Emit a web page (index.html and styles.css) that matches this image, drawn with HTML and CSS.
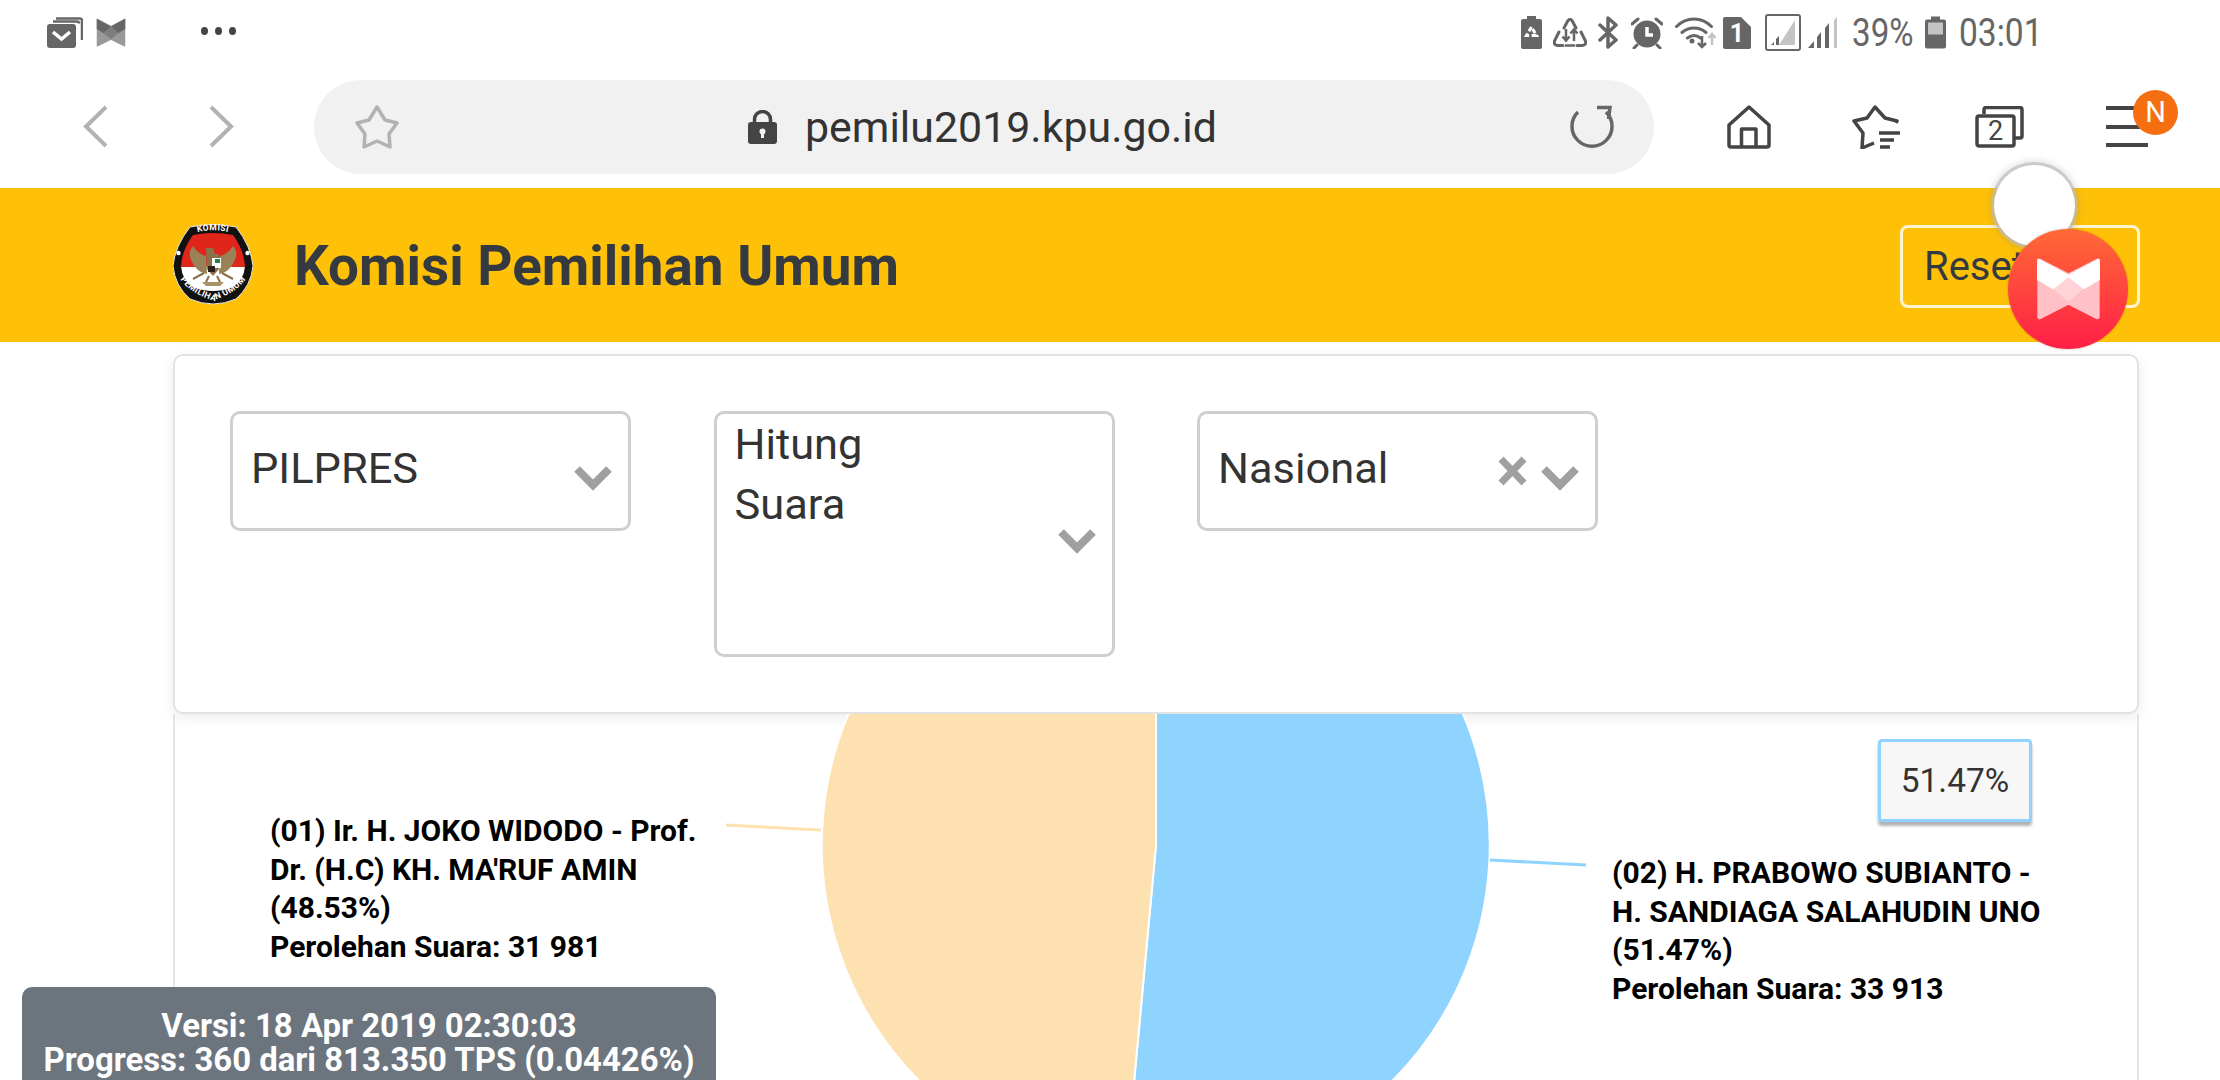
FILE: index.html
```html
<!DOCTYPE html>
<html lang="id">
<head>
<meta charset="utf-8">
<title>Komisi Pemilihan Umum</title>
<link rel="stylesheet" href="styles.css">
</head>
<body>
<header class="status">
  <svg class="ic mailstack" viewBox="0 0 36 31"><path d="M9 1.500H33a2 2 0 0 1 2 2V23" class="s-thin"/><path d="M6 4.500H30a2 2 0 0 1 2 2" class="s-thin"/><rect x="0" y="7" width="29" height="24" rx="3" class="f-dark"/><path d="M6 15l8.500 7 8.500-7" class="s-white"/></svg>
  <svg class="ic bow-small" viewBox="0 0 190 185"><path d="M8 8L95 55 182 8V178L95 135 8 178Z" fill="#999" stroke="#999" stroke-width="8" stroke-linejoin="round"/><path d="M4 4L95 55 48 97 4 70Z" fill="#666"/><path d="M186 4L95 55 142 97 186 70Z" fill="#666"/><path d="M95 55L142 97 95 135 48 97Z" fill="#7d7d7d"/></svg>
  <div class="dots"><i></i><i></i><i></i></div>
  <div class="status-right">
    <svg class="ic w21" viewBox="0 0 21 33"><path d="M6 0h9v3h4a2 2 0 0 1 2 2v26a2 2 0 0 1-2 2H2a2 2 0 0 1-2-2V5a2 2 0 0 1 2-2h4z" class="f-dark"/><path d="M10.500 11l-5 8.500h10z" class="s-recy"/></svg>
    <svg class="ic w34 g11" viewBox="0 0 34 30"><path d="M11 10l4-7.500q2-2 4 0l4 7.500M6 14L1.500 23q-1 4 3 4.500H10M24 27.500h5.500q4-.5 3-4.500L28 14" class="s-mid"/><path d="M13 11v11M9.500 18.500l3.500 4 3.500-4M21 23V12M17.500 15.500l3.500-4 3.500 4" class="s-fine"/><path d="M12 27.500h10" class="s-fine"/></svg>
    <svg class="ic w21 g11" viewBox="0 0 21 33"><path d="M2 9l16 15-8 7V2l8 7L2 24" class="s-bt"/></svg>
    <svg class="ic w32 g12" viewBox="0 0 32 32"><circle cx="16" cy="17" r="13.500" class="f-dark"/><path d="M16 10v8h6" class="s-white"/><path d="M1 7l6-5M31 7l-6-5M6 28l-3 3M26 28l3 3" class="s-mid"/></svg>
    <svg class="ic w43 g12" viewBox="0 0 43 32"><path d="M1.500 9.500c10-10 25-10 35 0M7 15.500c7-6 17-6 24 0M12.500 21c4-3 9-3 13 0" class="s-mid"/><circle cx="17" cy="24" r="2.500" class="f-dark"/><path d="M27 19v11M23 26l4 4 4-4" class="s-fine"/><path d="M37 28V17M33.500 21l3.500-4 3.500 4" class="s-light"/></svg>
    <svg class="ic w28 g5" viewBox="0 0 28 32"><path d="M2 0H18L28 10V30a2 2 0 0 1-2 2H2a2 2 0 0 1-2-2V2a2 2 0 0 1 2-2Z" class="f-dark"/><text x="14" y="25" class="sim-num">1</text></svg>
    <svg class="ic w36 g14" viewBox="0 0 36 37"><rect x="1" y="1" width="34" height="35" rx="2" class="s-box"/><path d="M30 6V31H14Z" fill="#c4c4c4"/><path d="M6 31l3-3v3zM11 31v-6l3-3v9z" fill="#666"/></svg>
    <svg class="ic w31 g7" viewBox="0 0 31 31"><path d="M0 31l6-7v7zM9 31V20l4-5v16zM17 31V11l4-5v25z" fill="#666"/><path d="M26 31V3l3-3v31z" fill="#c4c4c4"/></svg>
    <span class="st-text pct g13">39%</span>
    <svg class="ic w21 g13" viewBox="0 0 21 32"><path d="M6 0h9v3h4a2 2 0 0 1 2 2v25a2 2 0 0 1-2 2H2a2 2 0 0 1-2-2V5a2 2 0 0 1 2-2h4z" fill="#666"/><rect x="3" y="6" width="15" height="12" fill="#c4c4c4"/></svg>
    <span class="st-text clock g13">03:01</span>
  </div>
</header>

<nav class="toolbar">
  <svg class="ic back" viewBox="0 0 25 43"><path d="M23 2L3 21.500 23 41" class="s-nav"/></svg>
  <svg class="ic fwd" viewBox="0 0 25 43"><path d="M2 2L22 21.500 2 41" class="s-nav"/></svg>
  <div class="urlbar">
    <svg class="ic star" viewBox="0 0 44 44"><path d="M22 2L30 15 42 18 34 29 35 42 22 36 9 42 10 29 2 18 14 15Z" class="s-star"/></svg>
    <div class="url">
      <svg class="ic lock" viewBox="0 0 29 34"><path d="M6.500 14V9.500a8 8 0 0 1 16 0V14" class="s-lock"/><rect x="0" y="12" width="29" height="22" rx="3" fill="#444"/><circle cx="14.500" cy="21.500" r="3" fill="#f1f1f1"/><rect x="13" y="22" width="3" height="6" fill="#f1f1f1"/></svg>
      <span class="url-text">pemilu2019.kpu.go.id</span>
    </div>
    <svg class="ic reload" viewBox="0 0 45 44"><path d="M9 7A20 20 0 1 0 37 7" class="s-reload"/><path d="M28 2.500H41L39.500 14" class="s-reload"/></svg>
  </div>
  <svg class="ic home" viewBox="0 0 44 44"><path d="M22 2L2 20V40a2 2 0 0 0 2 2H40a2 2 0 0 0 2-2V20Z" class="s-tool"/><path d="M14.500 42V24H29V42" class="s-tool"/></svg>
  <svg class="ic starlist" viewBox="0 0 48 44"><path d="M44 18L45 16 33 13 23 2 15 13 2 16 11 28 10 43 22 38" class="s-tool"/><path d="M27 28H48M28 35H42M28 42H38" class="s-tool"/></svg>
  <svg class="ic tabs" viewBox="0 0 49 42"><path d="M9 8V3.500a2 2 0 0 1 2-2H45a2 2 0 0 1 2 2V30a2 2 0 0 1-2 2H40" class="s-tool"/><rect x="2" y="10" width="37" height="30" rx="2" class="s-tool"/><text x="20.500" y="34" class="tab-num">2</text></svg>
  <div class="menu"><i></i><i></i><i></i><span class="badge">N</span></div>
</nav>

<section class="brand">
  <svg class="logo" viewBox="0 0 80 81">
    <path d="M17 3Q40-2 63 3 78 22 80 42 78 62 63 75 40 85 17 75 2 62 0 42 2 22 17 3Z" fill="#111" stroke="#e8e8e0" stroke-width="1"/>
    <clipPath id="inner"><path d="M20 11Q40 7 60 11 71 26 72 42 71 56 60 63 40 71 20 63 9 56 8 42 9 26 20 11Z"/></clipPath>
    <g clip-path="url(#inner)">
      <rect x="0" y="0" width="80" height="43" fill="#e0251b"/>
      <rect x="0" y="43" width="80" height="30" fill="#fff"/>
    </g>
    <circle cx="5.500" cy="29" r="2.200" fill="#fff"/><circle cx="74.500" cy="29" r="2.200" fill="#fff"/>
    <path d="M17 33Q16 26 20 22 25 30 33 32L34 50Q22 48 17 33Z" fill="#9a8258"/>
    <path d="M63 33Q64 26 60 22 55 30 47 32L46 50Q58 48 63 33Z" fill="#9a8258"/>
    <path d="M33 24H40L42 30H46V45L40 52 34 45Z" fill="#8c7148"/>
    <rect x="39" y="34" width="9" height="10" fill="#fff"/><rect x="42" y="35" width="5" height="4" fill="#1f8a3c"/>
    <rect x="35" y="42" width="7" height="6" fill="#2a2018"/>
    <path d="M29 58H51L47 62H33Z" fill="#a89468"/>
    <path d="M20 55L31 49M60 55L49 49M36 52L33 58M44 52L47 58" stroke="#8c7148" stroke-width="2"/>
    <path id="arcTop" d="M18 10Q40 2.500 62 10" fill="none"/>
    <path id="arcBot" d="M2 44Q8 66 40 76.500 72 66 78 44" fill="none"/>
    <text class="logo-text"><textPath href="#arcTop" startOffset="50%">KOMISI</textPath></text>
    <text class="logo-text lower"><textPath href="#arcBot" startOffset="50%">PEMILIHAN UMUM</textPath></text>
  </svg>
  <h1 class="title">Komisi Pemilihan Umum</h1>
  <button class="reset">Reset</button>
</section>

<main class="main">
  <section class="filters">
    <div class="select">
      <div class="sel-text single">PILPRES</div>
      <svg class="chev" viewBox="0 0 38 26"><path d="M3 4L19 20 35 4" class="s-chev"/></svg>
    </div>
    <div class="select tall">
      <div class="sel-text">Hitung<br>Suara</div>
      <svg class="chev" viewBox="0 0 38 26"><path d="M3 4L19 20 35 4" class="s-chev"/></svg>
    </div>
    <div class="select">
      <div class="sel-text single">Nasional</div>
      <svg class="clear" viewBox="0 0 29 30"><path d="M3 3L26 27M26 3L3 27" class="s-clear"/></svg>
      <svg class="chev" viewBox="0 0 38 26"><path d="M3 4L19 20 35 4" class="s-chev"/></svg>
    </div>
  </section>

  <section class="chart">
    <svg class="pie" viewBox="0 0 1962 366">
      <path d="M981 131V-203A334 334 0 1 1 950.200 463.600Z" fill="#8fd3ff" stroke="#fff" stroke-width="2"/>
      <path d="M981 131L950.200 463.600A334 334 0 0 1 981-203Z" fill="#fde1b0" stroke="#fff" stroke-width="2"/>
      <path d="M551 111L646 116" class="lead-a"/>
      <path d="M1315 146L1411 151" class="lead-b"/>
    </svg>
    <div class="slice-label left-label">(01) Ir. H. JOKO WIDODO - Prof.<br>Dr. (H.C) KH. MA'RUF AMIN<br>(48.53%)<br>Perolehan Suara: 31 981</div>
    <div class="slice-label right-label">(02) H. PRABOWO SUBIANTO -<br>H. SANDIAGA SALAHUDIN UNO<br>(51.47%)<br>Perolehan Suara: 33 913</div>
    <div class="tip">51.47%</div>
  </section>
</main>

<div class="version">Versi: 18 Apr 2019 02:30:03<br>Progress: 360 dari 813.350 TPS (0.04426%)</div>

<div class="float-white"></div>
<div class="float-red">
  <svg class="bow-big" viewBox="0 0 190 185">
    <path d="M8 8L95 53 182 8V177L95 132 8 177Z" fill="#ffc0c6" stroke="#ffc0c6" stroke-width="14" stroke-linejoin="round"/>
    <path d="M95 53L142 90 95 132 48 90Z" fill="#ffd3d7"/>
    <path d="M4 4L95 53 48 90 1 62Z" fill="#fff" stroke="#fff" stroke-width="6" stroke-linejoin="round"/>
    <path d="M186 4L95 53 142 90 189 62Z" fill="#fff" stroke="#fff" stroke-width="6" stroke-linejoin="round"/>
  </svg>
</div>
</body>
</html>
```
FILE: styles.css
```css
* { box-sizing: border-box; }
html, body { margin: 0; padding: 0; }
body {
  position: relative;
  width: 2220px;
  height: 1080px;
  overflow: hidden;
  background: #fff;
  font-family: Roboto, "Liberation Sans", sans-serif;
  color: #343a40;
}
.ic { display: block; flex: none; }

/* status bar */
.status { height: 65px; display: flex; align-items: center; padding-left: 47px; }
.mailstack { width: 36px; height: 31px; }
.bow-small { width: 30px; height: 29px; margin-left: 13px; }
.dots { display: flex; gap: 7px; margin-left: 75px; margin-top: -3px; }
.dots i { display: block; width: 7px; height: 8px; border-radius: 50%; background: #444; }
.status-right { display: flex; align-items: center; margin-left: auto; padding-right: 182px; }
.w21 { width: 21px; height: 33px; }
.w34 { width: 34px; height: 30px; }
.w32 { width: 32px; height: 32px; }
.w43 { width: 43px; height: 32px; }
.w28 { width: 28px; height: 32px; }
.w36 { width: 36px; height: 37px; }
.w31 { width: 31px; height: 31px; }
.g5 { margin-left: 5px; }
.g7 { margin-left: 7px; }
.g11 { margin-left: 11px; }
.g12 { margin-left: 12px; }
.g13 { margin-left: 13px; }
.g14 { margin-left: 14px; }
.st-text { font-size: 39px; line-height: 40px; color: #666; white-space: nowrap; transform-origin: left center; display: block; }
.pct { width: 60px; transform: scaleX(.85); }
.clock { width: 79px; transform: scaleX(.86); }

.f-dark { fill: #666; }
.s-thin { fill: none; stroke: #666; stroke-width: 2.500; }
.s-white { fill: none; stroke: #fff; stroke-width: 3.500; }
.s-recy { fill: none; stroke: #fff; stroke-width: 3; stroke-dasharray: 5 2.500; }
.s-mid { fill: none; stroke: #666; stroke-width: 3; stroke-linecap: round; }
.s-fine { fill: none; stroke: #666; stroke-width: 2.500; }
.s-light { fill: none; stroke: #c4c4c4; stroke-width: 2.500; }
.s-bt { fill: none; stroke: #666; stroke-width: 3.500; stroke-linejoin: round; stroke-linecap: round; }
.s-box { fill: #fff; stroke: #666; stroke-width: 2; }
.sim-num { font: 700 25px Roboto, sans-serif; fill: #fff; text-anchor: middle; }

/* toolbar */
.toolbar { height: 123px; display: flex; align-items: center; padding-left: 83px; }
.back { width: 25px; height: 43px; }
.fwd { width: 25px; height: 43px; margin-left: 101px; }
.s-nav { fill: none; stroke: #b2b2b2; stroke-width: 4; }
.urlbar {
  width: 1340px;
  height: 94px;
  margin-left: 80px;
  padding-left: 41px;
  padding-right: 40px;
  display: flex;
  align-items: center;
  border-radius: 47px;
  background: #f1f1f1;
}
.star { width: 44px; height: 44px; }
.s-star { fill: none; stroke: #b2b2b2; stroke-width: 3.500; stroke-linejoin: round; }
.url { display: flex; align-items: center; margin-left: 349px; }
.lock { width: 29px; height: 34px; }
.s-lock { fill: none; stroke: #444; stroke-width: 3.500; }
.url-text { margin-left: 28px; font-size: 42.900px; line-height: 50px; color: #333; white-space: nowrap; }
.reload { width: 45px; height: 44px; margin-left: auto; }
.s-reload { fill: none; stroke: #666; stroke-width: 3.500; }
.home { width: 44px; height: 44px; margin-left: 73px; }
.s-tool { fill: none; stroke: #444; stroke-width: 3.500; stroke-linejoin: round; }
.starlist { width: 48px; height: 44px; margin-left: 81px; }
.tabs { width: 49px; height: 42px; margin-left: 75px; }
.tab-num { font: 400 27px Roboto, sans-serif; fill: #444; text-anchor: middle; }
.menu { position: relative; width: 42px; height: 41px; margin-left: 82px; display: flex; flex-direction: column; justify-content: space-between; }
.menu i { display: block; height: 4px; background: #444; }
.badge {
  position: absolute;
  left: 27px;
  top: -16px;
  width: 45px;
  height: 45px;
  border-radius: 50%;
  background: #f56e12;
  color: #fff;
  font-size: 29px;
  line-height: 45px;
  text-align: center;
}

/* brand */
.brand { height: 154px; display: flex; align-items: center; padding: 0 80px 0 173px; background: #ffc107; }
.logo { width: 80px; height: 81px; flex: none; margin-top: -2px; }
.logo-text { font: 700 8.500px Roboto, sans-serif; fill: #fff; text-anchor: middle; letter-spacing: .4px; }
.logo-text.lower { font-size: 8.500px; }
.title { margin: 1px 0 0 41px; font-size: 54.800px; line-height: 60px; font-weight: 700; color: #343a40; white-space: nowrap; }
.reset {
  width: 240px;
  height: 83px;
  margin-left: auto;
  margin-top: 3px;
  padding: 0 0 0 21px;
  border: 3px solid #fff4d0;
  border-radius: 8px;
  background: transparent;
  color: #343a40;
  font: 400 40px Roboto, sans-serif;
  text-align: left;
}

/* filters */
.main { padding: 12px 81px 0 173px; }
.filters {
  height: 360px;
  display: flex;
  align-items: flex-start;
  gap: 82.500px;
  padding: 55px;
  border: 2px solid #e2e2e2;
  border-radius: 10px;
  background: #fff;
  box-shadow: 0 4px 14px rgba(0, 0, 0, .08);
}
.select {
  width: 401px;
  height: 120px;
  display: flex;
  align-items: center;
  padding: 0 16px 0 18px;
  border: 3px solid #cfcfcf;
  border-radius: 10px;
}
.select.tall { height: 246px; }
.sel-text { flex: 1; align-self: flex-start; padding-top: 1px; font-size: 43.400px; line-height: 60px; color: #333; }
.sel-text.single { padding-top: 25px; }
.chev { width: 38px; height: 26px; flex: none; margin-top: 13px; }
.s-chev { fill: none; stroke: #a0a0a0; stroke-width: 8; }
.clear { width: 29px; height: 30px; flex: none; margin-right: 14px; }
.s-clear { fill: none; stroke: #a0a0a0; stroke-width: 7; }

/* chart */
.chart {
  position: relative;
  height: 366px;
  overflow: hidden;
  border-left: 2px solid #e4e4e4;
  border-right: 2px solid #e4e4e4;
}
.pie { position: absolute; left: 0; top: 0; width: 1962px; height: 366px; }
.lead-a { fill: none; stroke: #fde1b0; stroke-width: 3; }
.lead-b { fill: none; stroke: #8fd3ff; stroke-width: 3; }
.slice-label { position: absolute; font-size: 30px; line-height: 38.500px; font-weight: 700; color: #000; white-space: nowrap; }
.left-label { left: 95px; top: 98px; }
.right-label { left: 1437px; top: 140px; }
.tip {
  position: absolute;
  left: 1703px;
  top: 25px;
  width: 154px;
  height: 83px;
  border: 3px solid #90d3ff;
  border-radius: 4px;
  background: #f7f7f7;
  box-shadow: 0 4px 3px rgba(0, 0, 0, .3);
  font-size: 33.400px;
  line-height: 78px;
  text-align: center;
  color: #333;
}

/* version */
.version {
  position: absolute;
  left: 22px;
  bottom: 0;
  width: 694px;
  height: 93px;
  padding-top: 22px;
  border-radius: 10px 10px 0 0;
  background: #6c757d;
  color: #fff;
  font-size: 32.900px;
  font-weight: 700;
  line-height: 34px;
  text-align: center;
  white-space: nowrap;
}

/* floating */
.float-white {
  position: absolute;
  left: 1994px;
  top: 165px;
  width: 81px;
  height: 81px;
  border-radius: 50%;
  background: #fff;
  box-shadow: 0 0 0 3px rgba(190, 190, 190, .7), 0 0 6px 5px rgba(120, 120, 120, .2);
}
.float-red {
  position: absolute;
  left: 2008px;
  top: 229px;
  width: 120px;
  height: 120px;
  display: flex;
  align-items: center;
  justify-content: center;
  border-radius: 50%;
  background: linear-gradient(180deg, #ff6a35, #ff1f47);
  box-shadow: 0 0 2px rgba(120, 60, 0, .5);
}
.bow-big { width: 63px; height: 62px; }
```
